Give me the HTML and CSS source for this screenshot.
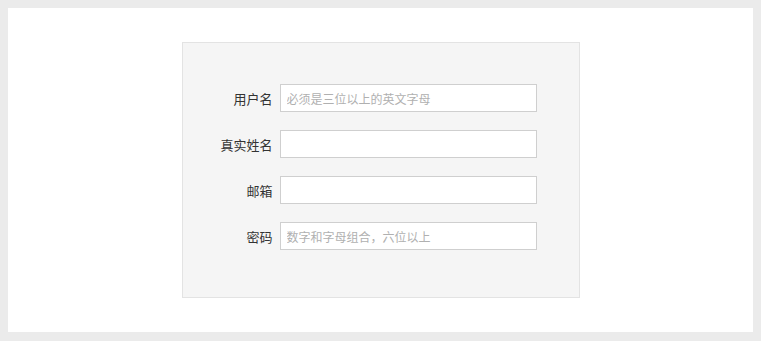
FILE: index.html
```html
<!DOCTYPE html>
<html lang="zh">
<head>
<meta charset="utf-8">
<link rel="stylesheet" href="styles.css">
</head>
<body>
<div class="page">
  <form class="panel">
    <div class="row"><label class="label">用户名</label><input class="field" type="text" placeholder="必须是三位以上的英文字母"></div>
    <div class="row"><label class="label">真实姓名</label><input class="field" type="text"></div>
    <div class="row"><label class="label">邮箱</label><input class="field" type="text"></div>
    <div class="row"><label class="label">密码</label><input class="field" type="text" placeholder="数字和字母组合，六位以上"></div>
  </form>
</div>
</body>
</html>
```
FILE: styles.css
```css
html, body { margin: 0; padding: 0; }
body {
  background: #ebebeb;
  padding: 8px 8px 9px 8px;
  font-family: "Noto Sans CJK SC", "Noto Sans", sans-serif;
}
.page {
  background: #fff;
  height: 324px;
  padding-top: 34px;
  box-sizing: border-box;
}
.panel {
  width: 398px;
  height: 256px;
  margin: 0 auto;
  box-sizing: border-box;
  background: #f5f5f5;
  border: 1px solid #e3e3e3;
  padding-top: 41px;
  display: flex;
  flex-direction: column;
  gap: 18px;
}
.row {
  display: flex;
  align-items: center;
  gap: 7px;
}
.label {
  width: 90px;
  text-align: right;
  font-size: 13px;
  color: #333;
}
.field {
  width: 257px;
  height: 28px;
  box-sizing: border-box;
  margin: 0;
  border: 1px solid #cfcfcf;
  background: #fff;
  padding: 0 6px;
  font-family: "Noto Sans CJK SC", "Noto Sans", sans-serif;
  font-size: 12px;
  color: #333;
  outline: none;
}
.field::placeholder { color: #b0b0b0; }
```
